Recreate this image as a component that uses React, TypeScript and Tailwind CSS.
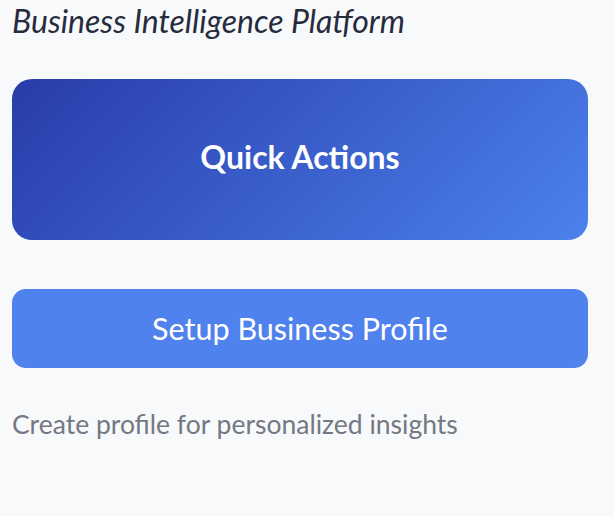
export default function App() {
  return (
    <div className="min-h-[516px] w-full bg-[#f8f9fb]" style={{ fontFamily: "Lato, 'Noto Sans', sans-serif" }}>
      <div className="ml-3 flex w-[576px] flex-col">
        <h2 className="whitespace-nowrap text-[32px] font-normal italic leading-[42px] text-[#262b3d]">
          Business Intelligence Platform
        </h2>
        <div className="mt-[37px] flex h-[161px] items-center justify-center rounded-[20px] bg-[linear-gradient(135deg,#283ca9,#4c81eb)]">
          <span className="pb-[6px] text-[32px] font-bold text-white">Quick Actions</span>
        </div>
        <button className="mt-[49px] flex h-[79px] items-center justify-center rounded-[14px] bg-[#4f82ed] text-[30.5px] text-white">
          Setup Business Profile
        </button>
        <p className="mt-[38px] whitespace-nowrap text-[26.5px] leading-[36px] text-[#737884]">
          Create profile for personalized insights
        </p>
      </div>
    </div>
  );
}
